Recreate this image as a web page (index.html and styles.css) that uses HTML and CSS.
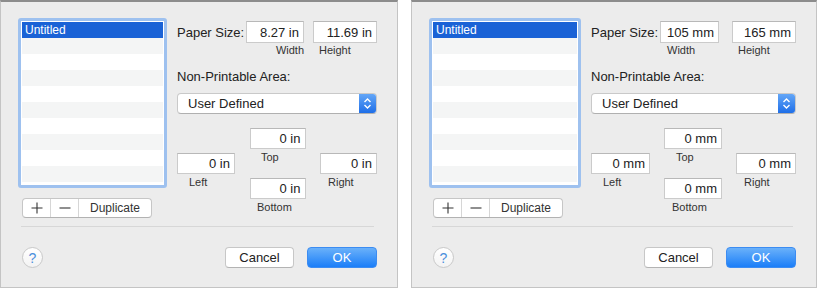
FILE: index.html
```html
<!DOCTYPE html>
<html lang="en">
<head>
  <meta charset="UTF-8">
  <title>Custom Paper Sizes</title>
  <link rel="stylesheet" href="styles.css">
</head>
<body>
  <div class="sheets">

    <!-- inches -->
    <section class="panel">
      <div class="panel-body">
        <div class="list-col">
          <ul class="size-list">
            <li class="selected">Untitled</li>
            <li></li><li></li><li></li><li></li><li></li><li></li><li></li><li></li><li></li><li></li>
          </ul>
          <div class="segmented">
            <span class="seg seg-icon"><svg width="12" height="12" viewBox="0 0 12 12"><path d="M6 0.5 V11.5 M0.5 6 H11.5" stroke="#333" stroke-width="1.1"/></svg></span>
            <span class="seg seg-icon"><svg width="12" height="12" viewBox="0 0 12 12"><path d="M0.5 6 H11.5" stroke="#333" stroke-width="1.1"/></svg></span>
            <span class="seg seg-text">Duplicate</span>
          </div>
        </div>

        <div class="form-col">
          <div class="paper-row">
            <span class="label">Paper Size:</span>
            <span class="field field-w">8.27 in</span>
            <span class="field field-h">11.69 in</span>
          </div>
          <div class="paper-sub">
            <span class="sub sub-w">Width</span>
            <span class="sub sub-h">Height</span>
          </div>
          <div class="label np-label">Non-Printable Area:</div>
          <div class="popup">
            <span>User Defined</span>
            <span class="stepper">
              <svg width="9" height="13" viewBox="0 0 9 13"><path d="M1.5 5 L4.5 2 L7.5 5 M1.5 8 L4.5 11 L7.5 8" fill="none" stroke="#fff" stroke-width="1.4"/></svg>
            </span>
          </div>
          <div class="margins">
            <span class="field m-top">0 in</span>
            <span class="sub s-top">Top</span>
            <span class="field m-left">0 in</span>
            <span class="field m-right">0 in</span>
            <span class="sub s-left">Left</span>
            <span class="sub s-right">Right</span>
            <span class="field m-bottom">0 in</span>
            <span class="sub s-bottom">Bottom</span>
          </div>
        </div>
      </div>

      <div class="separator"></div>

      <div class="footer">
        <span class="help">?</span>
        <div class="actions">
          <span class="btn">Cancel</span>
          <span class="btn btn-default">OK</span>
        </div>
      </div>
    </section>

    <!-- millimetres -->
    <section class="panel panel-mm">
      <div class="panel-body">
        <div class="list-col">
          <ul class="size-list">
            <li class="selected">Untitled</li>
            <li></li><li></li><li></li><li></li><li></li><li></li><li></li><li></li><li></li><li></li>
          </ul>
          <div class="segmented">
            <span class="seg seg-icon"><svg width="12" height="12" viewBox="0 0 12 12"><path d="M6 0.5 V11.5 M0.5 6 H11.5" stroke="#333" stroke-width="1.1"/></svg></span>
            <span class="seg seg-icon"><svg width="12" height="12" viewBox="0 0 12 12"><path d="M0.5 6 H11.5" stroke="#333" stroke-width="1.1"/></svg></span>
            <span class="seg seg-text">Duplicate</span>
          </div>
        </div>

        <div class="form-col">
          <div class="paper-row">
            <span class="label">Paper Size:</span>
            <span class="field field-w">105 mm</span>
            <span class="field field-h">165 mm</span>
          </div>
          <div class="paper-sub">
            <span class="sub sub-w">Width</span>
            <span class="sub sub-h">Height</span>
          </div>
          <div class="label np-label">Non-Printable Area:</div>
          <div class="popup">
            <span>User Defined</span>
            <span class="stepper">
              <svg width="9" height="13" viewBox="0 0 9 13"><path d="M1.5 5 L4.5 2 L7.5 5 M1.5 8 L4.5 11 L7.5 8" fill="none" stroke="#fff" stroke-width="1.4"/></svg>
            </span>
          </div>
          <div class="margins">
            <span class="field m-top">0 mm</span>
            <span class="sub s-top">Top</span>
            <span class="field m-left">0 mm</span>
            <span class="field m-right">0 mm</span>
            <span class="sub s-left">Left</span>
            <span class="sub s-right">Right</span>
            <span class="field m-bottom">0 mm</span>
            <span class="sub s-bottom">Bottom</span>
          </div>
        </div>
      </div>

      <div class="separator"></div>

      <div class="footer">
        <span class="help">?</span>
        <div class="actions">
          <span class="btn">Cancel</span>
          <span class="btn btn-default">OK</span>
        </div>
      </div>
    </section>

  </div>
</body>
</html>
```

FILE: styles.css
```css
body {
  margin: 0;
  background-color: #fff;
  font-family: "Liberation Sans", Arial, sans-serif;
  font-size: 13px;
  color: #222;
}

.sheets {
  display: flex;
  gap: 13px;
  width: 817px;
  height: 289px;
  overflow: hidden;
}

.panel {
  flex: none;
  box-sizing: border-box;
  width: 398px;
  height: 288px;
  padding: 16px 20px 0 17px;
  background-color: #ececec;
  border: 1px solid #c4c4c4;
  border-top: 2px solid #8c8c8c;
}

.panel-mm {
  width: 406px;
}

.panel-body {
  display: flex;
  gap: 10px;
  height: 208px;
}

/* list of saved sizes */
.list-col {
  width: 149px;
}

.panel-mm .list-col {
  width: 152px;
}

.size-list {
  box-sizing: border-box;
  height: 170px;
  margin: 0;
  padding: 1px;
  list-style: none;
  overflow: hidden;
  background-color: #fff;
  border: 3px solid #9ec1ef;
  border-radius: 3px;
}

.size-list li {
  height: 16px;
  padding-left: 3px;
  font-size: 12px;
  line-height: 16px;
}

.size-list li:nth-child(even) {
  background-color: #f4f5f5;
}

.size-list li.selected {
  background-color: #1a62d6;
  color: #fff;
}

.segmented {
  display: flex;
  width: 130px;
  height: 20px;
  margin: 10px 0 0 4px;
  background-color: #fff;
  border: 1px solid #c6c6c6;
  border-bottom-color: #b2b2b2;
  border-radius: 4px;
  box-sizing: border-box;
}

.seg {
  display: flex;
  align-items: center;
  justify-content: center;
  border-right: 1px solid #d6d6d6;
  color: #333;
}

.seg-icon {
  width: 27px;
}

.seg-text {
  flex: 1;
  border-right: none;
  font-size: 12px;
}

/* form */
.form-col {
  flex: 1;
  padding-top: 3px;
}

.paper-row {
  display: flex;
  align-items: center;
}

.label {
  flex: 1;
  white-space: nowrap;
}

.field {
  box-sizing: border-box;
  height: 22px;
  padding-right: 4px;
  line-height: 21px;
  text-align: right;
  white-space: nowrap;
  background-color: #fff;
  border: 1px solid #cbcbcb;
  border-top-color: #b8b8b8;
}

.field-w { width: 58px; }
.field-h { width: 64px; margin-left: 9px; }
.panel-mm .field-w { width: 59px; }
.panel-mm .field-h { margin-left: 13px; }

.paper-sub {
  display: flex;
  justify-content: flex-end;
  gap: 9px;
  margin-top: 1px;
}

.panel-mm .paper-sub {
  gap: 13px;
}

.sub {
  font-size: 11px;
  line-height: 13px;
  color: #333;
}

.sub-w {
  width: 57px;
  text-align: right;
}

.panel-mm .sub-w {
  width: 52px;
  text-align: left;
  padding-left: 7px;
}

.sub-h {
  width: 58px;
  padding-left: 6px;
}

.np-label {
  margin-top: 12px;
  line-height: 16px;
}

.popup {
  display: flex;
  align-items: center;
  justify-content: space-between;
  box-sizing: border-box;
  height: 21px;
  margin-top: 8px;
  padding-left: 10px;
  background-color: #fff;
  border: 1px solid #c9c9c9;
  border-bottom-color: #b0b0b0;
  border-radius: 4px;
  overflow: hidden;
}

.stepper {
  display: flex;
  align-items: center;
  justify-content: center;
  width: 17px;
  height: 100%;
  background: linear-gradient(#63a6f7, #1f6fe8);
}

/* margins diamond */
.margins {
  display: grid;
  grid-template-columns: 58px 1fr 57px;
  grid-template-rows: 25px 25px 25px 14px;
  margin-top: 14px;
}

.panel-mm .margins {
  grid-template-columns: 59px 1fr 60px;
}

.margins .field {
  width: 100%;
  height: 21px;
  line-height: 20px;
}

.margins .m-top,
.margins .m-bottom {
  width: 56px;
  justify-self: center;
}

.panel-mm .margins .m-top,
.panel-mm .margins .m-bottom {
  width: 58px;
}

.m-top    { grid-area: 1 / 2; }
.m-left   { grid-area: 2 / 1; }
.m-right  { grid-area: 2 / 3; }
.m-bottom { grid-area: 3 / 2; }

.margins .sub {
  margin-top: -2px;
}

.s-top    { grid-area: 2 / 2; justify-self: start; margin-left: 26px; }
.s-left   { grid-area: 3 / 1; padding-left: 12px; }
.s-right  { grid-area: 3 / 3; padding-left: 8px; }
.s-bottom { grid-area: 4 / 2; justify-self: start; margin-left: 22px; }

.separator {
  height: 1px;
  margin: 0 3px 0 3px;
  background-color: #d7d7d7;
}

.footer {
  display: flex;
  align-items: center;
  justify-content: space-between;
  margin-top: 20px;
}

.help {
  display: flex;
  align-items: center;
  justify-content: center;
  box-sizing: border-box;
  width: 21px;
  height: 21px;
  margin-left: 4px;
  border-radius: 50%;
  background: linear-gradient(#fff, #f3f3f3);
  border: 1px solid #c9c9c9;
  color: #4a8fdc;
  font-size: 14px;
}

.actions {
  display: flex;
  gap: 13px;
}

.btn {
  box-sizing: border-box;
  width: 69px;
  height: 21px;
  line-height: 19px;
  text-align: center;
  background-color: #fff;
  border: 1px solid #c7c7c7;
  border-bottom-color: #b3b3b3;
  border-radius: 4px;
}

.btn-default {
  width: 70px;
  color: #fff;
  border-color: #3c8cf2;
  background: linear-gradient(#6ab1fa, #1b7ef8);
}
```
